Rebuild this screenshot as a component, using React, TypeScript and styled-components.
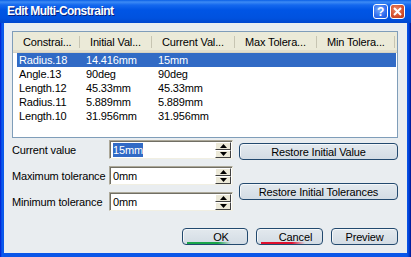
import * as React from "react";
import styled, { createGlobalStyle } from "styled-components";

const Global = createGlobalStyle`
  html, body { margin: 0; padding: 0; background: #0a3fd0; }
  #root { width: 411px; height: 257px; }
  * { box-sizing: border-box; }
`;

const Window = styled.div`
  width: 411px;
  height: 257px;
  display: flex;
  flex-direction: column;
  background: linear-gradient(90deg, #0019cf 0px, #0a5cf0 2px, #0a56e8 4px, #0a56e8 calc(100% - 4px), #0040d6 calc(100% - 2px), #00138c 100%);
  font-family: "Liberation Sans", Arial, sans-serif;
  font-size: 11px;
  letter-spacing: -0.15px;
  color: #000;
  overflow: hidden;
`;

const TitleBar = styled.div`
  height: 23px;
  flex-shrink: 0;
  display: flex;
  align-items: center;
  padding: 0 6px 0 7px;
  background: linear-gradient(180deg, #0a5fe6 0px, #3d8bf5 2px, #1468ee 5px, #0055e5 10px, #0052df 18px, #0047cf 23px);
`;

const Title = styled.div`
  flex: 1;
  color: #fff;
  font-family: "Liberation Sans", Arial, sans-serif;
  font-weight: bold;
  font-size: 12px;
  letter-spacing: -0.55px;
  text-shadow: 1px 1px 0 #0a1e7a;
  padding-bottom: 1px;
`;

const CaptionButton = styled.div<{ $red?: boolean }>`
  width: 15px;
  height: 15px;
  margin-left: 2px;
  border: 1px solid #fff;
  border-radius: 3px;
  display: flex;
  align-items: center;
  justify-content: center;
  color: #fff;
  font-weight: bold;
  font-size: 12px;
  background: ${(p) =>
    p.$red
      ? "radial-gradient(circle at 40% 35%, #e98a6a, #d44f2c 60%, #b4361a)"
      : "radial-gradient(circle at 40% 35%, #79a8f8, #2f6ef0 60%, #1d52d6)"};
`;

const Body = styled.div`
  flex: 1;
  margin: 0 4px 4px 4px;
  background: #e9edf0;
  display: flex;
  flex-direction: column;
  padding: 8px 9px 0 8px;
`;

const ListBox = styled.div`
  height: 107px;
  width: 386px;
  border: 1px solid #7f9db9;
  background: #fff;
  flex-shrink: 0;
`;

const HeaderRow = styled.div`
  display: flex;
  height: 21px;
  background: #ebead8;
  border-bottom: 1px solid #d6d2c2;
  box-shadow: inset 0 -2px 0 #e2decd;
`;

const HeaderCell = styled.div<{ $w: number }>`
  width: ${(p) => p.$w}px;
  flex-shrink: 0;
  position: relative;
  display: flex;
  align-items: center;
  padding-left: 10px;
  white-space: nowrap;
  overflow: hidden;
  &::after {
    content: "";
    position: absolute;
    right: 0;
    top: 4px;
    bottom: 4px;
    width: 1px;
    background: #c7c5b2;
    box-shadow: 1px 0 0 #fff;
  }
`;

const Rows = styled.div`
  padding: 0 1px 0 4px;
`;

const Row = styled.div<{ $sel?: boolean }>`
  display: flex;
  height: 14px;
  align-items: center;
  background: ${(p) => (p.$sel ? "#316ac5" : "transparent")};
  color: ${(p) => (p.$sel ? "#fff" : "#000")};
`;

const Cell = styled.div<{ $w: number; $first?: boolean }>`
  width: ${(p) => p.$w}px;
  flex-shrink: 0;
  padding-left: ${(p) => (p.$first ? 2 : 7)}px;
  white-space: nowrap;
`;

const FormArea = styled.div`
  display: flex;
  margin-top: 2px;
`;

const Fields = styled.div`
  display: flex;
  flex-direction: column;
  gap: 7px;
`;

const FieldRow = styled.div`
  display: flex;
  align-items: center;
  height: 19px;
`;

const Label = styled.div`
  width: 97px;
  white-space: nowrap;
`;

const InputBox = styled.div`
  width: 124px;
  height: 19px;
  display: flex;
  align-items: center;
  background: #fff;
  border: 1px solid;
  border-color: #aca899 #f1efe2 #f1efe2 #aca899;
  box-shadow: inset 1px 1px 0 #716f64;
  padding: 0 1px 0 3px;
`;

const InputText = styled.div`
  flex: 1;
  padding-top: 1px;
`;

const Selected = styled.span`
  background: #316ac5;
  color: #fff;
  padding: 1px 0;
`;

const Spinner = styled.div`
  width: 16px;
  height: 16px;
  display: flex;
  flex-direction: column;
`;

const SpinButton = styled.div`
  flex: 1;
  background: #ece9d8;
  border: 1px solid;
  border-color: #fff #404040 #404040 #fff;
  display: flex;
  align-items: center;
  justify-content: center;
`;

const SideButtons = styled.div`
  display: flex;
  flex-direction: column;
  margin-left: 6px;
  padding-top: 3px;
  gap: 23px;
`;

const PushButton = styled.div<{ $w: number; $line?: string }>`
  width: ${(p) => p.$w}px;
  height: 17px;
  border: 1px solid #22496e;
  border-radius: 4px;
  background: linear-gradient(180deg, #e3e9ee, #d3dce4);
  box-shadow: inset 1px 1px 0 #f4f7f9;
  display: flex;
  align-items: center;
  justify-content: center;
  position: relative;
  white-space: nowrap;
  ${(p) =>
    p.$line
      ? `padding-left: 12px;
  &::after {
    content: "";
    position: absolute;
    left: 4px;
    bottom: 0px;
    width: 44px;
    height: 2px;
    background: linear-gradient(90deg, ${p.$line}, ${p.$line} 70%, transparent);
  }`
      : ""}
`;

const Footer = styled.div`
  display: flex;
  justify-content: flex-end;
  gap: 8px;
  margin-top: 17px;
`;

const Tri = ({ up }: { up?: boolean }) => (
  <svg width="7" height="4" viewBox="0 0 7 4">
    <polygon points={up ? "3.5,0 7,4 0,4" : "0,0 7,0 3.5,4"} fill="#000" />
  </svg>
);

const cols = [67, 72, 83, 82, 78];
const headers = ["Constrai...", "Initial Val...", "Current Val...", "Max Tolera...", "Min Tolera..."];
const data = [
  ["Radius.18", "14.416mm", "15mm"],
  ["Angle.13", "90deg", "90deg"],
  ["Length.12", "45.33mm", "45.33mm"],
  ["Radius.11", "5.889mm", "5.889mm"],
  ["Length.10", "31.956mm", "31.956mm"],
];

const Field = ({ label, value, sel }: { label: string; value: string; sel?: boolean }) => (
  <FieldRow>
    <Label>{label}</Label>
    <InputBox>
      <InputText>{sel ? <Selected>{value}</Selected> : value}</InputText>
      <Spinner>
        <SpinButton><Tri up /></SpinButton>
        <SpinButton><Tri /></SpinButton>
      </Spinner>
    </InputBox>
  </FieldRow>
);

export default function App() {
  return (
    <Window>
      <Global />
      <TitleBar>
        <Title>Edit Multi-Constraint</Title>
        <CaptionButton>?</CaptionButton>
        <CaptionButton $red>
          <svg width="9" height="9" viewBox="0 0 9 9">
            <path d="M1 1 L8 8 M8 1 L1 8" stroke="#fff" strokeWidth="2" />
          </svg>
        </CaptionButton>
      </TitleBar>
      <Body>
        <ListBox>
          <HeaderRow>
            {headers.map((h, i) => (
              <HeaderCell key={h} $w={cols[i]}>{h}</HeaderCell>
            ))}
          </HeaderRow>
          <Rows>
            {data.map((r, i) => (
              <Row key={r[0]} $sel={i === 0}>
                <Cell $w={cols[0] - 5} $first>{r[0]}</Cell>
                <Cell $w={cols[1]}>{r[1]}</Cell>
                <Cell $w={cols[2]}>{r[2]}</Cell>
                <Cell $w={cols[3]} />
                <Cell $w={cols[4]} />
              </Row>
            ))}
          </Rows>
        </ListBox>
        <FormArea>
          <Fields>
            <Field label="Current value" value="15mm" sel />
            <Field label="Maximum tolerance" value="0mm" />
            <Field label="Minimum tolerance" value="0mm" />
          </Fields>
          <SideButtons>
            <PushButton $w={159}>Restore Initial Value</PushButton>
            <PushButton $w={159}>Restore Initial Tolerances</PushButton>
          </SideButtons>
        </FormArea>
        <Footer>
          <PushButton $w={66} $line="#1aa64a">OK</PushButton>
          <PushButton $w={67} $line="#e0102e">Cancel</PushButton>
          <PushButton $w={67}>Preview</PushButton>
        </Footer>
      </Body>
    </Window>
  );
}
